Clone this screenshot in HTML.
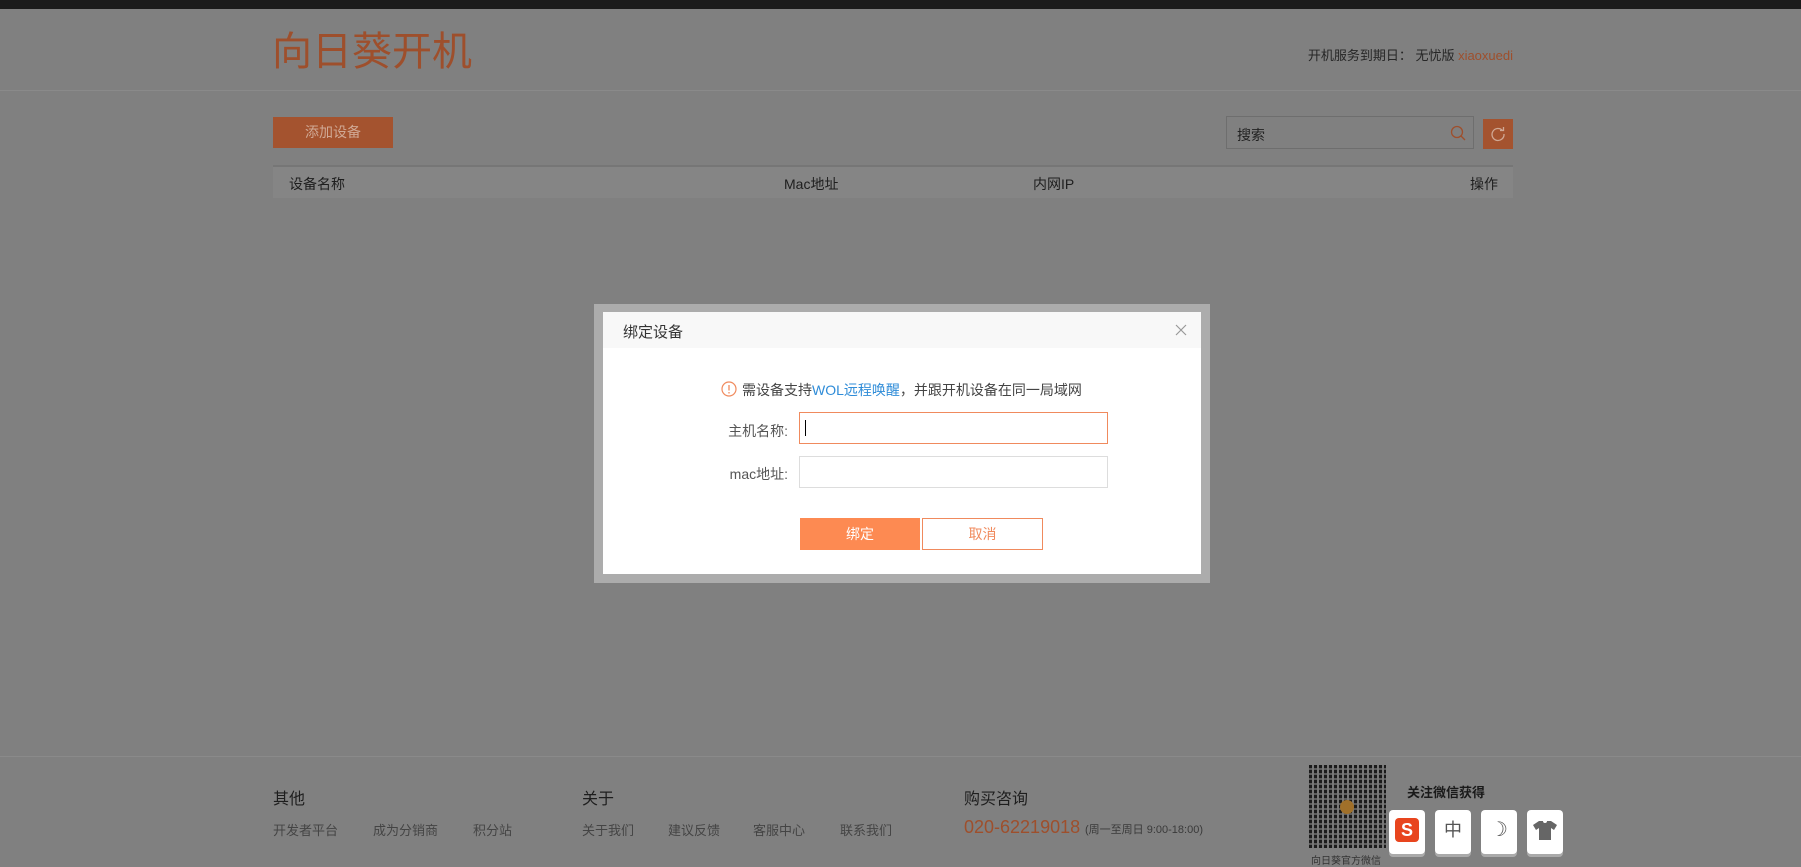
<!DOCTYPE html>
<html><head><meta charset="utf-8"><style>
*{margin:0;padding:0;box-sizing:border-box}
body{width:1801px;height:867px;background:#808080;font-family:"Liberation Sans","Noto Sans CJK SC",sans-serif;position:relative;overflow:hidden;color:#1e1e1e}
.a{position:absolute;white-space:nowrap}
</style></head><body>
<div class="a" style="left:0;top:0;width:1801px;height:9px;background:#1b1b1b"></div>
<div class="a" style="left:0;top:90px;width:1801px;height:1px;background:#8a8a8a"></div>
<div class="a" style="left:272px;top:26px;font-size:40px;color:#9e4f2c;line-height:52px">向日葵开机</div>
<div class="a" style="right:288px;top:45px;font-size:13px;color:#262626">开机服务到期日： 无忧版 <span style="color:#9e4f2c">xiaoxuedi</span></div>
<div class="a" style="left:273px;top:117px;width:120px;height:31px;background:#a4532f;color:#d0a995;font-size:14px;line-height:31px;text-align:center">添加设备</div>
<div class="a" style="left:1226px;top:116px;width:248px;height:33px;border:1px solid #6e6e6e;background:#808080"></div>
<div class="a" style="left:1237px;top:125px;font-size:14px;color:#222">搜索</div>
<svg class="a" style="left:1450px;top:125px" width="16" height="16" viewBox="0 0 16 16"><circle cx="7" cy="7" r="5.5" fill="none" stroke="#9e4f2c" stroke-width="1.3"/><line x1="11" y1="11" x2="15" y2="15" stroke="#9e4f2c" stroke-width="1.3"/></svg>
<div class="a" style="left:1483px;top:119px;width:30px;height:30px;background:#a4532f"></div>
<svg class="a" style="left:1490px;top:126px" width="16" height="16" viewBox="0 0 16 16"><path d="M12.5 4.5A6 6 0 1 0 14 8" fill="none" stroke="#d0a995" stroke-width="1.3"/><path d="M10 4.5h3.5V1" fill="none" stroke="#d0a995" stroke-width="1.3"/></svg>
<div class="a" style="left:273px;top:165px;width:1240px;height:33px;background:#858585;border-top:2px solid #767676"></div>
<div class="a" style="left:289px;top:174px;font-size:14px">设备名称</div>
<div class="a" style="left:784px;top:174px;font-size:14px">Mac地址</div>
<div class="a" style="left:1033px;top:174px;font-size:14px">内网IP</div>
<div class="a" style="left:1470px;top:174px;font-size:14px">操作</div>

<div class="a" style="left:594px;top:304px;width:616px;height:279px;background:#acacac"></div>
<div class="a" style="left:603px;top:312px;width:598px;height:262px;background:#fff"></div>
<div class="a" style="left:603px;top:312px;width:598px;height:36px;background:#f8f8f8"></div>
<div class="a" style="left:623px;top:321px;font-size:15px;color:#333">绑定设备</div>
<svg class="a" style="left:1175px;top:324px" width="12" height="12" viewBox="0 0 12 12"><path d="M1 1L11 11M11 1L1 11" stroke="#999" stroke-width="1.2"/></svg>
<svg class="a" style="left:721px;top:381px" width="16" height="16" viewBox="0 0 16 16"><circle cx="8" cy="8" r="7" fill="none" stroke="#f08a5d" stroke-width="1.2"/><line x1="8" y1="4" x2="8" y2="9.5" stroke="#f08a5d" stroke-width="1.3"/><circle cx="8" cy="11.8" r=".8" fill="#f08a5d"/></svg>
<div class="a" style="left:742px;top:380px;font-size:14px;color:#444">需设备支持<span style="color:#2f8cd8">WOL远程唤醒</span>，并跟开机设备在同一局域网</div>
<div class="a" style="right:1013px;top:421px;font-size:14px;color:#555">主机名称:</div>
<div class="a" style="left:799px;top:412px;width:309px;height:32px;border:1px solid #f08a5d"></div>
<div class="a" style="left:805px;top:420px;width:1px;height:16px;background:#000"></div>
<div class="a" style="right:1013px;top:464px;font-size:14px;color:#555">mac地址:</div>
<div class="a" style="left:799px;top:456px;width:309px;height:32px;border:1px solid #ddd"></div>
<div class="a" style="left:800px;top:518px;width:120px;height:32px;background:#fd8a52;color:#fff;font-size:14px;line-height:32px;text-align:center">绑定</div>
<div class="a" style="left:922px;top:518px;width:121px;height:32px;border:1px solid #f08a5d;color:#f08a5d;font-size:14px;line-height:30px;text-align:center">取消</div>

<div class="a" style="left:0;top:756px;width:1801px;height:1px;background:#8a8a8a"></div>
<div class="a" style="left:273px;top:785px;font-size:16px">其他</div>
<div class="a" style="left:582px;top:785px;font-size:16px">关于</div>
<div class="a" style="left:964px;top:785px;font-size:16px">购买咨询</div>
<div class="a" style="left:273px;top:820px;font-size:13px;color:#444">开发者平台</div>
<div class="a" style="left:373px;top:820px;font-size:13px;color:#444">成为分销商</div>
<div class="a" style="left:473px;top:820px;font-size:13px;color:#444">积分站</div>
<div class="a" style="left:582px;top:820px;font-size:13px;color:#444">关于我们</div>
<div class="a" style="left:668px;top:820px;font-size:13px;color:#444">建议反馈</div>
<div class="a" style="left:753px;top:820px;font-size:13px;color:#444">客服中心</div>
<div class="a" style="left:840px;top:820px;font-size:13px;color:#444">联系我们</div>
<div class="a" style="left:964px;top:817px;font-size:18px;color:#9e4f2c">020-62219018</div>
<div class="a" style="left:1085px;top:821px;font-size:11px;color:#3a3a3a">(周一至周日 9:00-18:00)</div>
<div class="a" style="left:1309px;top:765px;width:77px;height:83px;background:repeating-linear-gradient(90deg,#111 0 3px,#777 3px 5px),#111;opacity:.9"></div>
<div class="a" style="left:1309px;top:765px;width:77px;height:83px;background:repeating-linear-gradient(0deg,transparent 0 3px,rgba(120,120,120,.7) 3px 5px)"></div>
<div class="a" style="left:1340px;top:800px;width:14px;height:14px;border-radius:50%;background:#a0702a"></div>
<div class="a" style="left:1311px;top:852px;font-size:10px;color:#333">向日葵官方微信</div>
<div class="a" style="left:1407px;top:782px;font-size:13px;font-weight:bold;color:#1a1a1a">关注微信获得</div>
<div class="a" style="left:1389px;top:810px;width:36px;height:44px;background:#fff;border-radius:4px;box-shadow:0 3px 0 #aaa"><div style="margin:8px 6px;width:24px;height:24px;background:#e8451e;border-radius:4px;color:#fff;font-weight:bold;font-size:18px;text-align:center;line-height:24px">S</div></div>
<div class="a" style="left:1435px;top:810px;width:36px;height:44px;background:#fff;border-radius:4px;box-shadow:0 3px 0 #aaa;font-size:18px;color:#555;text-align:center;line-height:40px">中</div>
<div class="a" style="left:1481px;top:810px;width:36px;height:44px;background:#fff;border-radius:4px;box-shadow:0 3px 0 #aaa;font-size:20px;color:#555;text-align:center;line-height:40px">☽</div>
<div class="a" style="left:1527px;top:810px;width:36px;height:44px;background:#fff;border-radius:4px;box-shadow:0 3px 0 #aaa"><svg width="36" height="40" viewBox="0 0 36 40"><path d="M12 11l-6 4 3 5 3-2v12h12V18l3 2 3-5-6-4h-4a2 2 0 0 1-4 0z" fill="#666"/></svg></div>
</body></html>
